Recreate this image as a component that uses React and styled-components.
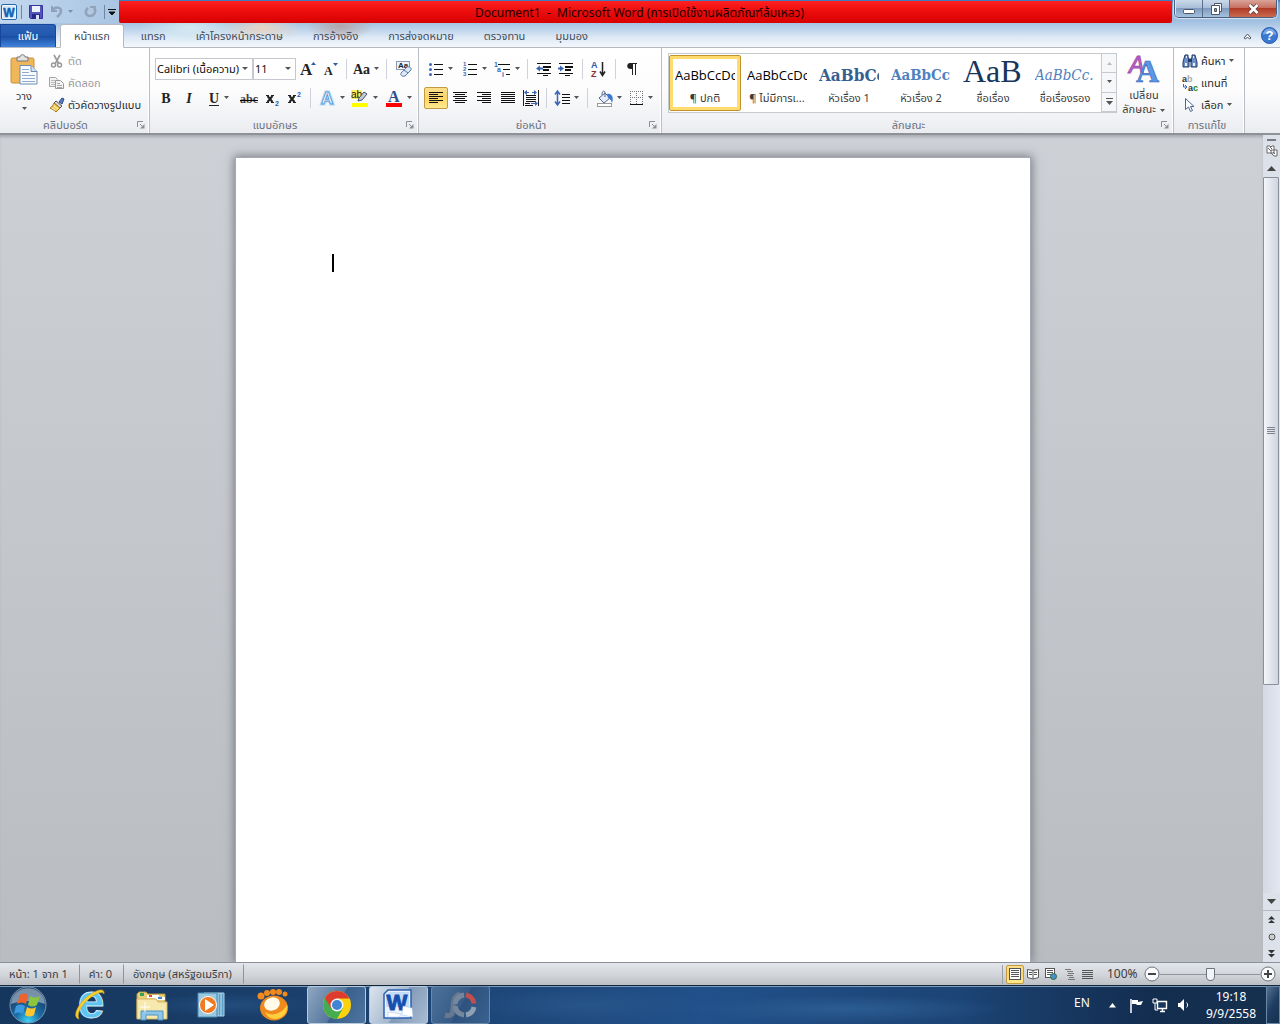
import React, { useState } from "react";
import styled, { createGlobalStyle, css } from "styled-components";

const GlobalStyle = createGlobalStyle`
  * {
    box-sizing: border-box;
  }
  body {
    margin: 0;
    font-family: "Noto Sans", "Noto Sans Thai", "Loma", sans-serif;
    font-size: 11px;
    line-height: 14px;
    color: #3b3b3b;
  }
  button, select, input {
    font: inherit;
    color: inherit;
    margin: 0;
  }
`;

const plainButton = css`
  border: 1px solid transparent;
  background: none;
  padding: 0;
  white-space: nowrap;
`;

const Window = styled.div`
  display: flex;
  flex-direction: column;
  height: 100vh;
  overflow: hidden;
`;

/* title bar */

const Glass = styled.div`
  background:
    radial-gradient(ellipse 34px 14px at 340px 26px, #b3a5a8, transparent),
    radial-gradient(ellipse 40px 14px at 262px 28px, #e8d6c4, transparent),
    radial-gradient(ellipse 50px 16px at 190px 28px, #d4eaf2, transparent),
    linear-gradient(#3876b8, #6f9fd0 3px, #8fb3da 14px, #a9c6e4 24px, #dfeaf6 38px, #f3f7fb 47px);
`;

const TitleBar = styled.header`
  display: flex;
  align-items: flex-start;
  height: 24px;
`;

const QuickAccess = styled.div`
  display: flex;
  align-items: center;
  width: 119px;
  height: 23px;
  padding-left: 1px;
  background: linear-gradient(90deg, #c3d8ee, #a9c5e3);
`;

const QuickButton = styled.button`
  ${plainButton}
  display: flex;
  align-items: center;
  justify-content: center;
  gap: 4px;
  width: ${(p) => p.$w}px;
  height: 20px;
`;

const Title = styled.div`
  flex: 1;
  height: 22px;
  margin-top: 1px;
  border-radius: 0 0 2px 2px;
  background: linear-gradient(#ff2222, #f01010 8px, #d80000);
  color: #1c0000;
  font-size: 12px;
  line-height: 23px;
  text-align: center;
  white-space: pre;
  padding-right: 12px;
`;

const WindowButtons = styled.div`
  display: flex;
  margin: 0 3px 0 2px;
  border: 1px solid #4a5f7d;
  border-top: 0;
  border-radius: 0 0 5px 5px;
  overflow: hidden;
  box-shadow: 0 0 1px 1px #d5e4f3;
`;

const WindowButton = styled.button`
  ${plainButton}
  display: flex;
  align-items: center;
  justify-content: center;
  width: ${(p) => (p.$close ? 47 : 27)}px;
  height: 17px;
  border: 0;
  border-left: 1px solid ${(p) => (p.$first ? "#dce8f4" : "#5b6f8c")};
  background: ${(p) =>
    p.$close
      ? "linear-gradient(#d9a49b, #c9705f 45%, #b13c26 50%, #c96a50)"
      : "linear-gradient(#cbdaea, #a9bfd8 45%, #7f9cbf 50%, #a5c1de)"};
`;

/* tabs */

const TabBar = styled.nav`
  display: flex;
  align-items: flex-end;
  height: 24px;
  border-bottom: 1px solid #b6bac1;
`;

const FileTab = styled.button`
  ${plainButton}
  width: 56px;
  height: 23px;
  border: 1px solid #17479b;
  border-bottom: 0;
  border-radius: 0 3px 0 0;
  background: linear-gradient(#2c62b5, #2157ae 50%, #1c4ea4 52%, #3f84dd);
  color: #fff;
  margin-right: 4px;
`;

const Tab = styled.button`
  ${plainButton}
  height: 23px;
  padding: 0 14px;
  color: #444b57;
  ${(p) =>
    p.$active &&
    css`
      padding: 0 13px;
      margin: 0 2px -1px 0;
      height: 24px;
      border-color: #b6bac1;
      border-bottom-color: #fff;
      border-radius: 3px 3px 0 0;
      background: #fff;
    `}
`;

const TabTools = styled.div`
  display: flex;
  align-items: center;
  gap: 5px;
  margin-left: auto;
  height: 23px;
  padding-right: 2px;
`;

/* ribbon */

const Ribbon = styled.section`
  display: flex;
  height: 87px;
  flex-shrink: 0;
  background: linear-gradient(#ffffff, #fcfcfd 50%, #eaecf0);
  border-bottom: 2px solid #8e9298;
`;

const Group = styled.div`
  display: flex;
  flex-direction: column;
  flex: ${(p) => (p.$w ? `0 0 ${p.$w}px` : "0 1 auto")};
  border-right: 1px solid #b9bdc4;
  box-shadow: inset -1px 0 0 #fff;
`;

const GroupBody = styled.div`
  flex: 1;
  min-height: 0;
  display: flex;
  flex-direction: ${(p) => (p.$column ? "column" : "row")};
  padding: ${(p) => p.$pad || "5px 4px 0"};
`;

const GroupLabel = styled.div`
  display: flex;
  align-items: center;
  height: 16px;
  padding-right: 4px;
  color: #6a7180;

  span {
    flex: 1;
    padding-right: ${(p) => (p.$launch ? 6 : 0)}px;
    text-align: center;
  }
`;

const ToolRow = styled.div`
  display: flex;
  align-items: center;
  height: 22px;
  margin-bottom: 7px;
`;

const Tool = styled.button`
  ${plainButton}
  display: flex;
  align-items: center;
  justify-content: center;
  gap: 3px;
  width: ${(p) => p.$w || 22}px;
  height: 22px;
  border-radius: 2px;
  ${(p) =>
    p.$on &&
    css`
      border-color: #c29b3e;
      background: linear-gradient(#fbdf8d, #fdd565 50%, #ffe98f);
    `}
`;

const Separator = styled.span`
  width: 1px;
  height: ${(p) => p.$h || 20}px;
  margin: 0 ${(p) => p.$gap || 5}px;
  background: ${(p) => p.$color || "#cfd2d8"};
`;

const SelectBox = styled.label`
  position: relative;
  width: ${(p) => p.$w}px;
  height: 22px;
  margin-right: ${(p) => p.$after || 0}px;

  &::after {
    content: "";
    position: absolute;
    right: 5px;
    top: 9px;
    border: 3px solid transparent;
    border-top-color: #555;
    pointer-events: none;
  }

  select {
    width: 100%;
    height: 22px;
    padding: 0 12px 0 1px;
    border: 1px solid #c5c9cf;
    border-radius: 0;
    background: #fff;
    color: #111;
    appearance: none;
  }
`;

const BigButton = styled.button`
  ${plainButton}
  display: flex;
  flex-direction: column;
  align-items: center;
  gap: 4px;
  width: ${(p) => p.$w}px;
  height: 66px;
  padding-top: 3px;
`;

const CommandList = styled.div`
  display: flex;
  flex-direction: column;
`;

const Command = styled.button`
  ${plainButton}
  display: flex;
  align-items: center;
  gap: 3px;
  height: 22px;
  color: ${(p) => (p.disabled ? "#9a9a9a" : "#2b2b2b")};
`;

const Gallery = styled.div`
  display: flex;
  height: 60px;
  margin-top: 3px;
  border: 1px solid #c6c9ce;
  background: #fff;
`;

const StyleItem = styled.button`
  ${plainButton}
  width: 72px;
  height: 56px;
  margin-top: 1px;
  padding: 0 4px;
  display: flex;
  flex-direction: column;
  align-items: center;
  border-radius: 2px;
  ${(p) =>
    p.$on &&
    css`
      border-color: #c2922e;
      box-shadow: inset 0 0 0 3px #ffdc6d;
    `}
`;

const Sample = styled.span`
  width: 60px;
  height: 35px;
  overflow: hidden;
  text-align: left;
  font-family: ${(p) => p.$font || '"Open Sans", sans-serif'};
  font-size: ${(p) => p.$size}px;
  font-weight: ${(p) => (p.$bold ? 700 : 400)};
  font-style: ${(p) => (p.$italic ? "italic" : "normal")};
  line-height: ${(p) => p.$lh || 39}px;
  color: ${(p) => p.$color};
`;

const GalleryScroll = styled.div`
  display: flex;
  flex-direction: column;
  width: 15px;

  button {
    flex: 1;
    display: flex;
    align-items: center;
    justify-content: center;
    padding: 0;
    border: 0;
    border-left: 1px solid #c6c9ce;
    border-bottom: 1px solid #c6c9ce;
    background: #f6f7f9;
  }
`;

/* document */

const Workspace = styled.main`
  flex: 1;
  min-height: 0;
  display: flex;
  background: linear-gradient(#cdd0d5, #b9bcc0);
`;

const Canvas = styled.div`
  flex: 1;
  display: flex;
  justify-content: center;
  padding: 22px 0 0 2px;
  overflow: hidden;
  box-shadow: inset 0 3px 3px -1px #a8abb0;
`;

const Page = styled.article`
  width: 796px;
  padding: 96px;
  background: #fff;
  border: 1px solid #a4a8b0;
  border-bottom: 0;
  box-shadow: 0 0 9px 1px #777b82;
`;

const Caret = styled.div`
  width: 2px;
  height: 18px;
  background: #000;
`;

const ScrollColumn = styled.aside`
  display: flex;
  flex-direction: column;
  width: 17px;
  background: #dde1ea;
`;

const ScrollButton = styled.button`
  ${plainButton}
  display: flex;
  align-items: center;
  justify-content: center;
  height: ${(p) => p.$h || 17}px;
`;

const Splitter = styled.div`
  height: 2px;
  margin: 4px 4px 1px;
  background: #777b83;
`;

const ScrollTrack = styled.div`
  flex: 1;
  background: linear-gradient(90deg, #d4d9e4, #e3e7f0);
`;

const ScrollThumb = styled.div`
  display: flex;
  align-items: center;
  justify-content: center;
  height: 71%;
  margin-right: 1px;
  border: 1px solid #8a909c;
  border-radius: 1px;
  background: linear-gradient(90deg, #f3f6fa, #dde2ea 60%, #cfd4de);
`;

const BrowseButtons = styled.div`
  display: flex;
  flex-direction: column;
  border-top: 1px solid #b5bac5;
`;

/* status bar */

const StatusBar = styled.footer`
  display: flex;
  align-items: center;
  height: 23px;
  border-top: 1px solid #8a8f9c;
  background: linear-gradient(#e3e6eb, #cfd2d7 60%, #bcbfc4);
`;

const StatusItem = styled.button`
  ${plainButton}
  height: 20px;
  padding: 0 11px 1px 8px;
  border-right: 1px solid #8f949c;
`;

const ViewButtons = styled.div`
  display: flex;
  align-items: center;
  margin-left: auto;
  padding-left: 3px;
  border-left: 1px solid #9a9fa8;
`;

const ViewButton = styled(Tool)`
  width: 18px;
  height: 19px;
`;

const Zoom = styled.div`
  display: flex;
  align-items: center;
  padding: 0 4px 0 11px;

  output {
    width: 37px;
    font-size: 12px;
  }

  button {
    ${plainButton}
    display: flex;
    border: 0;
  }

  input {
    appearance: none;
    width: 100px;
    height: 16px;
    background: linear-gradient(#8f949c, #8f949c) center / 100% 1px no-repeat;
  }

  input::-webkit-slider-thumb {
    appearance: none;
    width: 9px;
    height: 13px;
    border: 1px solid #6d737d;
    border-radius: 1px 1px 5px 5px;
    background: #f2f4f7;
  }
`;

/* taskbar */

const Taskbar = styled.div`
  display: flex;
  align-items: center;
  height: 39px;
  border-top: 1px solid #10263c;
  box-shadow: inset 0 1px 0 #7d9ab8;
  background:
    radial-gradient(ellipse 160px 14px at 66% 60%, #2b5c92, transparent),
    radial-gradient(ellipse 120px 16px at 46% 50%, #275489, transparent),
    radial-gradient(ellipse 90px 12px at 18% 50%, #234d7d, transparent),
    linear-gradient(90deg, #15365d, #1c4270 30%, #21508a 55%, #1c4475 75%, #132d4f 90%, #16304f);
`;

const Launcher = styled.button`
  ${plainButton}
  display: flex;
  align-items: center;
  justify-content: center;
  flex-shrink: 0;
  width: ${(p) => p.$w || 62}px;
  height: 38px;
`;

const RunningApp = styled(Launcher)`
  width: 59px;
  margin: 0 0 0 3px;
  border-color: ${(p) => (p.$faint ? "#6a88aa" : "#b8cadd")};
  border-radius: 3px;
  background: ${(p) =>
    p.$active
      ? "linear-gradient(120deg, #dbe4ee, #a5b8cf 50%, #8199b7 52%, #a9bbd1)"
      : p.$faint
      ? "linear-gradient(120deg, #4d7199, #365c87 50%, #2d527d 52%, #3a6190)"
      : "linear-gradient(120deg, #8fa7c1, #56789f 50%, #39608d 52%, #4f759f)"};
`;

const Tray = styled.div`
  display: flex;
  align-items: center;
  margin-left: auto;
  color: #fff;
  font-size: 12px;
`;

const TrayButton = styled.button`
  ${plainButton}
  display: flex;
  align-items: center;
  justify-content: center;
  width: 24px;
  height: 24px;
`;

const Language = styled.span`
  width: 26px;
  padding-bottom: 5px;
`;

const Clock = styled.time`
  width: 70px;
  text-align: center;
  line-height: 17px;
`;

const ShowDesktop = styled.button`
  width: 14px;
  height: 38px;
  padding: 0;
  border: 1px solid #6b86a5;
  background: linear-gradient(120deg, #53718f, #1f3d61 50%, #15304f);
`;

/* icons */

const Svg = ({ w = 16, h = 16, children }) => (
  <svg width={w} height={h} viewBox={`0 0 ${w} ${h}`} fill="none" overflow="visible" aria-hidden="true">
    {children}
  </svg>
);

const Arrow = ({ color = "#555", up }) => (
  <Svg w={7} h={4}>
    <path d={up ? "M1 4h5L3.5 1z" : "M1 0h5L3.5 3z"} fill={color} />
  </Svg>
);

const Lines = ({ rows, color = "#111" }) => (
  <g stroke={color}>
    {rows.map(([x, y, w], i) => (
      <path key={i} d={`M${x} ${y + 0.5}h${w}`} />
    ))}
  </g>
);

const sans = { fontFamily: "Liberation Sans, sans-serif", fontWeight: 700 };
const serif = { fontFamily: "Liberation Serif, serif", fontWeight: 700 };

const Launch = () => (
  <Svg w={8} h={8}>
    <path d="M.5 6V.5H6M3 3l4 4" stroke="#8b8f97" />
    <path d="M7.500 3v4.500H3z" fill="#8b8f97" />
  </Svg>
);

const WordSmall = () => (
  <Svg w={16} h={16}>
    <rect x=".5" y=".5" width="15" height="15" rx="1.5" fill="#f2f8fe" stroke="#2567ab" />
    <rect x="2" y="2" width="12" height="12" fill="#d8e8f8" />
    <text x="8" y="12.500" textAnchor="middle" {...sans} fontSize="12" fill="#0f62b5" stroke="#0f62b5" strokeWidth=".5">W</text>
  </Svg>
);

const SaveIcon = () => (
  <Svg w={14} h={14}>
    <path d="M.5.5h13v13h-12l-1-1z" fill="#5355bd" stroke="#34369a" />
    <path d="M3 1h8v6H3z" fill="#eef2ff" />
    <path d="M3 9h8v5H3z" fill="#26288a" />
    <path d="M7 10h3v4H7z" fill="#dce0f5" />
  </Svg>
);

const UndoIcon = () => (
  <Svg w={13} h={13}>
    <path d="M2 1v5h5" stroke="#8fa2ba" strokeWidth="2" />
    <path d="M2 6c3-5 9-4 9 0 0 3-2 4-4 6" stroke="#8fa2ba" strokeWidth="2.500" />
  </Svg>
);

const RedoIcon = () => (
  <Svg w={13} h={13}>
    <path d="M4 3C0 6 2 11 6 11s7-5 4-8" stroke="#93a4b9" strokeWidth="2.500" />
    <path d="M6 2h5v5" stroke="#93a4b9" strokeWidth="2" />
  </Svg>
);

const PasteIcon = () => (
  <Svg w={28} h={31}>
    <rect x="1" y="4" width="23" height="25" rx="1.5" fill="#efb65a" stroke="#c98e36" />
    <path d="M7 7V3h3c0-3 5-3 5 0h3v4z" fill="#e2e2e2" stroke="#777" />
    <path d="M10 11.500h11l6 6V30H10z" fill="#f8fbff" stroke="#6e8cae" />
    <path d="M21 11.500v6h6" fill="#cddff2" stroke="#6e8cae" />
    <path d="M12 15.500h7M12 18.500h7M12 21.500h13M12 24.500h13M12 27.500h13" stroke="#8facd0" />
  </Svg>
);

const CutIcon = () => (
  <Svg>
    <path d="M5 2l5 9M11 2L6 11" stroke="#999" strokeWidth="1.600" />
    <circle cx="4.500" cy="12" r="2" stroke="#999" strokeWidth="1.500" />
    <circle cx="10.500" cy="12" r="2" stroke="#999" strokeWidth="1.500" />
  </Svg>
);

const CopyIcon = () => (
  <Svg>
    <path d="M.5 2.500h6l2 2v7h-8z" fill="#f2f2f2" stroke="#a5a5a5" />
    <path d="M2 5.500h4M2 7.500h4M2 9.500h4" stroke="#bbb" />
    <path d="M6.500 5.500h5l3 3v5h-8z" fill="#f2f2f2" stroke="#999" />
    <path d="M8 8.500h3M8 10.500h5M8 12.500h5" stroke="#aaa" />
  </Svg>
);

const BrushIcon = () => (
  <Svg>
    <path d="M10 5l3-4 2 1-2 5z" fill="#5b7fc4" stroke="#2e4a86" />
    <path d="M7 4l6 5-2 2-6-5z" fill="#d6d8dd" stroke="#555" />
    <path d="M5 6l6 5-4 4c-2-2-4-3-6-4 2-1 3-3 4-5z" fill="#f4c95c" stroke="#a57a1d" />
    <path d="M5 9l4 3M3 11l3 2" stroke="#fff1b8" />
  </Svg>
);

const GrowFont = ({ down }) => (
  <Svg w={18} h={18}>
    <text x={down ? 3 : 1} y="15" {...serif} fontSize={down ? 12 : 17} fill="#222">A</text>
    <path d={down ? "M12 3h5l-2.500 3z" : "M12 5h5l-2.500-3z"} fill="#2f59a8" />
  </Svg>
);

const ChangeCase = () => (
  <Svg w={17} h={18}>
    <text x="0" y="14" {...serif} fontSize="14" fill="#222">Aa</text>
  </Svg>
);

const ClearFormat = () => (
  <Svg w={18} h={18}>
    <rect x="1.500" y="1.500" width="13" height="8" fill="#eef4fb" stroke="#8b9bb5" />
    <text x="3" y="8" {...sans} fontSize="8" fill="#223">Aa</text>
    <path d="M6 13l6-6c2-1 5 1 4 3l-6 6c-3 1-5-1-4-3z" fill="#dce9f7" stroke="#5a76a5" />
    <path d="M9 10l4 3" stroke="#5a76a5" />
  </Svg>
);

const Letter = ({ children, italic, underline, strike }) => (
  <Svg w={strike ? 18 : 12} h={18}>
    <text
      x={strike ? 9 : 6}
      y="14"
      textAnchor="middle"
      {...serif}
      fontSize={strike ? 12 : 14}
      fontStyle={italic ? "italic" : "normal"}
      fill={strike ? "#444" : "#222"}
    >
      {children}
    </text>
    {underline && <path d="M1 16.500h10" stroke="#222" />}
    {strike && <path d="M0 11.500h18" stroke="#000" />}
  </Svg>
);

const Script = ({ up }) => (
  <Svg w={15} h={18}>
    <path d="M2.500 7l5 6M7.500 7l-5 6" stroke="#222" strokeWidth="2" />
    <path d="M1 6.500h3M6 6.500h3M1 13.500h3M6 13.500h3" stroke="#222" />
    <text x="10" y={up ? 8 : 17} {...sans} fontSize="7" fill="#2f59a8">2</text>
  </Svg>
);

const TextEffects = () => (
  <Svg w={17} h={18}>
    <text x="2" y="15" {...sans} fontSize="17" fill="#fff" stroke="#b9dcf7" strokeWidth="3">A</text>
    <text x="2" y="15" {...sans} fontSize="17" fill="#fff" stroke="#5b9bd5">A</text>
  </Svg>
);

const Highlight = () => (
  <Svg w={18} h={18}>
    <rect y="1" width="11" height="9" fill="#ffef5c" />
    <text x="0" y="9" {...sans} fontWeight="400" fontSize="10" fill="#111">ab</text>
    <path d="M8 9l5-6 3 2-5 6-4 1z" fill="#c4cbd8" stroke="#44506a" />
    <path d="M1 14h16v4H1z" fill="#ff0" />
  </Svg>
);

const FontColor = () => (
  <Svg w={18} h={18}>
    <text x="3" y="13" {...serif} fontSize="16" fill="#2b4d8c">A</text>
    <path d="M1 14h16v4H1z" fill="#f00" />
  </Svg>
);

const Bullets = () => (
  <Svg w={16} h={16}>
    <g fill="#3b66b5">
      <circle cx="2.500" cy="3.500" r="1.500" />
      <circle cx="2.500" cy="8.500" r="1.500" />
      <circle cx="2.500" cy="13.500" r="1.500" />
    </g>
    <Lines rows={[[6, 3, 9], [6, 8, 9], [6, 13, 9]]} />
  </Svg>
);

const Numbers = () => (
  <Svg w={16} h={16}>
    <g {...sans} fontSize="6" fill="#3b66b5">
      <text x="1" y="5">1</text>
      <text x="1" y="10">2</text>
      <text x="1" y="15">3</text>
    </g>
    <Lines rows={[[6, 3, 9], [6, 8, 9], [6, 13, 9]]} />
  </Svg>
);

const Multilevel = () => (
  <Svg w={18} h={16}>
    <g {...sans} fontSize="7" fill="#3b66b5">
      <text x="1" y="6">1</text>
      <text x="4" y="11">a</text>
      <text x="9" y="16">i</text>
    </g>
    <Lines rows={[[5, 3, 12], [10, 8, 7], [13, 13, 4]]} />
  </Svg>
);

const Indent = ({ out }) => (
  <Svg w={16} h={14}>
    <Lines rows={[[1, 1, 14], [7, 4, 8], [7, 5, 8], [7, 7, 6], [7, 8, 6], [1, 11, 14], [7, 13, 5]]} />
    <path d={out ? "M0 6.500l4-3v2h3v2H4v2z" : "M6 6.500l-4-3v2H0v2h2v2z"} fill="#3b66b5" />
  </Svg>
);

const SortIcon = () => (
  <Svg w={18} h={18}>
    <text x="1" y="8" {...sans} fontSize="9" fill="#2b59b0">A</text>
    <text x="1" y="17" {...sans} fontSize="9" fill="#8e2f35">Z</text>
    <path d="M12.500 2v13M10 11.500l2.500 4 2.500-4" stroke="#222" strokeWidth="1.500" />
  </Svg>
);

const Pilcrow = () => (
  <Svg w={12} h={14}>
    <path d="M4 1h7v1h-1v11H9V2H7v11H6V7C0 8 0 1 4 1z" fill="#222" />
  </Svg>
);

const aligns = {
  left: [0, 14, 0, 9],
  center: [0, 14, 2, 10],
  right: [0, 14, 5, 9],
  justify: [0, 14, 0, 14],
};

const Align = ({ kind, color }) => {
  const [x, w, x2, w2] = aligns[kind];
  return (
    <Svg w={14} h={12}>
      <Lines
        color={color}
        rows={[[x, 0, w], [x2, 2, w2], [x, 4, w], [x2, 6, w2], [x, 8, w], [x2, 10, w2]]}
      />
    </Svg>
  );
};

const Distribute = () => (
  <Svg w={16} h={16}>
    <path d="M.5 0v16M15.500 0v16" stroke="#222" />
    <Lines rows={[[3, 5, 10], [3, 7, 10], [3, 9, 10], [3, 11, 10], [2, 13, 5], [2, 15, 8]]} />
    <path d="M1 2.500L4 0v2h2v1H4v2zM14 2.500L11 0v2H9v1h2v2zM8 13h4v-2l3 2.500-3 2.500v-2H8z" fill="#3b66b5" />
  </Svg>
);

const LineSpacing = () => (
  <Svg w={16} h={16}>
    <path d="M3.500 2v12M1 4.500L3.500 1 6 4.500M1 11.500L3.500 15 6 11.500" stroke="#3b66b5" strokeWidth="1.500" />
    <Lines rows={[[8, 4, 8], [8, 7, 8], [8, 10, 8], [8, 13, 8]]} />
  </Svg>
);

const Shading = () => (
  <Svg w={17} h={17}>
    <path d="M3 8l6-5 5 5-6 5z" fill="#e3ecf8" stroke="#50668e" />
    <path d="M9 7V2c-2-2-3 0-3 3" stroke="#50668e" />
    <path d="M11 4c5-1 7 4 5 9-1-3-2-4-4-5z" fill="#3b78cf" />
    <rect x="1.500" y="13.500" width="14" height="3" fill="#fff" stroke="#999" />
  </Svg>
);

const Borders = () => (
  <Svg w={14} h={14}>
    <path d="M0 .5h13M0 6.500h13M.5 0v13M6.500 0v13M12.500 0v13" stroke="#777" strokeDasharray="1 1" />
    <path d="M0 13.500h13" stroke="#111" />
  </Svg>
);

const ChangeStyles = () => (
  <Svg w={32} h={30}>
    <text x="1" y="19" {...sans} fontSize="23" fontStyle="italic" fontWeight="400" fill="#c069c8" stroke="#a04fb0">A</text>
    <text x="8" y="28" {...serif} fontSize="32" fill="#5c97e6" stroke="#2f62b0" strokeWidth=".6">A</text>
  </Svg>
);

const Binoculars = () => (
  <Svg>
    <path d="M3 2h3v3h1v9H1V9zM10 2h3l2 7v5H9V5h1z" fill="#6e8fc5" stroke="#1f3a6e" />
    <path d="M6 6h4v3H6z" fill="#1f3a6e" />
    <path d="M3 10h2v3H3zM11 10h2v3h-2zM4 3h1v2H4zM11 3h1v2h-1z" fill="#eaf2ff" />
  </Svg>
);

const ReplaceIcon = () => (
  <Svg>
    <text x="0" y="7" {...sans} fontSize="9" fill="#333">a<tspan fill="#aaa">b</tspan></text>
    <text x="6" y="16" {...sans} fontSize="9" fill="#333">a<tspan fill="#13861d">c</tspan></text>
    <path d="M1.500 9v3h3M3 10l2 2-2 2" stroke="#3b66b5" />
  </Svg>
);

const SelectIcon = () => (
  <Svg>
    <path d="M3.500 1.500v11l3-2.500 2 4.500 2-1-2-4h3.500z" fill="#f8fbff" stroke="#4d6690" />
  </Svg>
);

const HelpIcon = () => (
  <Svg w={17} h={17}>
    <circle cx="8.500" cy="8.500" r="8" fill="#3c78d0" stroke="#2a5cab" />
    <path d="M2 8a6.500 6.500 0 0 1 13 0c-4-2-9-2-13 0z" fill="#7ba7e6" />
    <text x="8.500" y="13" textAnchor="middle" {...sans} fontSize="13" fill="#fff">?</text>
  </Svg>
);

const StartOrb = () => (
  <Svg w={38} h={38}>
    <defs>
      <radialGradient id="orb" cx=".5" cy=".95" r=".8">
        <stop offset="0" stopColor="#3fd3f5" />
        <stop offset=".45" stopColor="#1a6ca5" />
        <stop offset="1" stopColor="#1b3b60" />
      </radialGradient>
    </defs>
    <circle cx="19" cy="19" r="18" fill="url(#orb)" stroke="#7a98b4" />
    <path d="M2 18C3-3 35-3 36 18c-10-4-24-4-34 0z" fill="#c5d6e4" opacity=".55" />
    <path d="M11 9c3-2 6-2 8 0l-2 9c-3-2-6-2-9 0z" fill="#f0622b" />
    <path d="M21 10c3 2 6 2 10 0l-3 9c-3 2-6 2-9 0z" fill="#8cc63e" />
    <path d="M7 20c3-2 6-2 9 0l-2 8c-3-2-6-2-9 0z" fill="#3c9be0" />
    <path d="M18 21c3 2 6 2 9 0l-2 8c-3 2-6 2-9 0z" fill="#fcc62f" />
  </Svg>
);

const IeIcon = () => (
  <Svg w={34} h={34}>
    <text x="18" y="30" textAnchor="middle" {...sans} fontSize="48" fill="#5fc4f2" stroke="#d5f1fd" strokeWidth=".8">e</text>
    <path d="M6 31C-2 29 6 15 15 8 23 2 32-1 31 6c-1-3-8-1-14 4C9 16 3 26 6 31z" fill="#f8d02e" stroke="#d8a51b" strokeWidth=".6" />
  </Svg>
);

const ExplorerIcon = () => (
  <Svg w={34} h={32}>
    <path d="M2 5l2-2h7l2 2h17v24H2z" fill="#e8cf7e" stroke="#b6953f" />
    <path d="M5 4h4v3H5z" fill="#35a34a" />
    <path d="M12 6h12v3H12z" fill="#fff" />
    <path d="M14 6h3v2h-3z" fill="#d34b32" />
    <path d="M20 8h10v3H20z" fill="#fff" />
    <path d="M23 8h4v2h-4z" fill="#3a86d8" />
    <path d="M2 10h19l2 3h9v17H2z" fill="#f7e9ae" stroke="#d2b464" />
    <path d="M6 31V22h22v9h-5v-5H11v5z" fill="#8ec5e8" stroke="#4b93c2" />
    <path d="M10 13v10M5 18h10" stroke="#fff" />
  </Svg>
);

const PlayerIcon = () => (
  <Svg w={28} h={28}>
    <path d="M7 2h20v23H7z" fill="#5d9fc5" stroke="#a8d3ea" />
    <path d="M21 2v23M24 2v23" stroke="#bfe0f1" />
    <path d="M1 2h19v24H1z" fill="#9cc9e2" stroke="#4a8bb2" />
    <circle cx="11" cy="14" r="8.500" fill="#f07a22" stroke="#fff" />
    <path d="M8 8l9 6-9 6z" fill="#fff" />
  </Svg>
);

const GomIcon = () => (
  <Svg w={34} h={34}>
    <g fill="#f08a1d">
      <circle cx="5" cy="8" r="3.500" />
      <circle cx="11" cy="5" r="3" />
      <circle cx="17" cy="4" r="3" />
      <circle cx="23" cy="4" r="3" />
      <circle cx="29" cy="6" r="2.500" />
      <ellipse cx="18" cy="20" rx="14" ry="12.500" />
    </g>
    <path d="M9 24c6 5 17 2 22-7 1 8-5 14-12 14-5 0-8-3-10-7z" fill="#ffcf3d" />
    <ellipse cx="16" cy="16" rx="8" ry="6.500" transform="rotate(-20 16 16)" fill="#fffbe8" />
  </Svg>
);

const ChromeIcon = () => (
  <Svg w={30} h={30}>
    <circle cx="15" cy="15" r="14" fill="#fbd20b" />
    <path d="M15 15L2.900 8A14 14 0 0 0 15 29l6-11z" fill="#45ad4f" />
    <path d="M15 8.500h12.400A14 14 0 0 0 2.900 8l6 10z" fill="#dd3b2f" />
    <circle cx="15" cy="15" r="6.500" fill="#f5f5f5" />
    <circle cx="15" cy="15" r="5" fill="#3f85d6" />
  </Svg>
);

const WordLarge = () => (
  <Svg w={32} h={32}>
    <path d="M1 5l4-4h23v28H1z" fill="#eaf3fd" stroke="#2c62b2" strokeWidth="1.500" />
    <path d="M3 6l3-3h20v15H3z" fill="#c4dcf8" />
    <text x="14" y="21" textAnchor="middle" {...sans} fontSize="22" fill="#164fae" stroke="#164fae">W</text>
    <path d="M5 23l13 2-2 3H5zM20 17l9 2 1 9-11-2z" fill="#fff" stroke="#a9c2e4" strokeWidth=".5" />
  </Svg>
);

const CaptureIcon = () => (
  <Svg w={32} h={28}>
    <path d="M0 24c7 2 8-2 8-7 0-7 1-12 7-14" stroke="#66788f" strokeWidth="5" />
    <path d="M19 4a10 10 0 0 0-9 9M10 15a10 10 0 0 0 9 9" stroke="#75879c" strokeWidth="5" />
    <path d="M21 24a10 10 0 0 0 8-8" stroke="#8fa0b5" strokeWidth="5" />
    <path d="M21 4a10 10 0 0 1 8 8.500" stroke="#c14e4e" strokeWidth="5" />
  </Svg>
);

const ZoomSign = ({ plus }) => (
  <Svg w={16} h={16}>
    <circle cx="8" cy="8" r="7" fill="#fafbfc" stroke="#6d737d" />
    <path d={plus ? "M4 8h8M8 4v8" : "M4 8h8"} stroke="#444" strokeWidth="2" />
  </Svg>
);

const tabs = ["หน้าแรก", "แทรก", "เค้าโครงหน้ากระดาษ", "การอ้างอิง", "การส่งจดหมาย", "ตรวจทาน", "มุมมอง"];

const heading = '"DejaVu Serif Condensed", "DejaVu Serif", serif';

const styles = [
  { name: "¶ ปกติ", sample: "AaBbCcDc", size: 13, color: "#000" },
  { name: "¶ ไม่มีการเ...", sample: "AaBbCcDc", size: 13, color: "#000" },
  { name: "หัวเรื่อง 1", sample: "AaBbCc", size: 17, color: "#365f91", font: heading, bold: true },
  { name: "หัวเรื่อง 2", sample: "AaBbCc", size: 15, color: "#4f81bd", font: heading, bold: true },
  { name: "ชื่อเรื่อง", sample: "AaB", size: 32, color: "#17365d", font: '"Liberation Serif", serif', lh: 30 },
  { name: "ชื่อเรื่องรอง", sample: "AaBbCc.", size: 15, color: "#4f81bd", font: heading, italic: true },
];

function RibbonGroup({ label, w, pad, column, launch = true, children }) {
  return (
    <Group $w={w}>
      <GroupBody $pad={pad} $column={column}>
        {children}
      </GroupBody>
      <GroupLabel $launch={launch}>
        <span>{label}</span>
        {launch && <Launch />}
      </GroupLabel>
    </Group>
  );
}

function App() {
  const [tab, setTab] = useState(0);
  const [style, setStyle] = useState(0);
  const [align, setAlign] = useState("left");
  const [zoom, setZoom] = useState(100);

  return (
    <Window>
      <GlobalStyle />
      <Glass>
        <TitleBar>
          <QuickAccess>
            <WordSmall />
            <Separator $h={14} $gap={4} $color="#6f86a3" />
            <QuickButton $w={20} aria-label="Save"><SaveIcon /></QuickButton>
            <QuickButton $w={32} aria-label="Undo"><UndoIcon /><Arrow color="#8090a5" /></QuickButton>
            <QuickButton $w={25} aria-label="Redo"><RedoIcon /></QuickButton>
            <Separator $h={14} $gap={1} $color="#6f86a3" />
            <QuickButton $w={12} aria-label="Customize">
              <Svg w={8} h={8}>
                <path d="M0 1.500h8M1 4h6L4 7z" stroke="#111" fill="#111" />
              </Svg>
            </QuickButton>
          </QuickAccess>
          <Title>Document1  -  Microsoft Word (การเปิดใช้งานผลิตภัณฑ์ล้มเหลว)</Title>
          <WindowButtons>
            <WindowButton $first aria-label="Minimize">
              <Svg w={12} h={12}>
                <rect x=".5" y="6.500" width="11" height="4" rx="1" fill="#fff" stroke="#4d5666" />
              </Svg>
            </WindowButton>
            <WindowButton aria-label="Restore">
              <Svg w={13} h={12}>
                <path d="M4.500.500h7v8h-7z" fill="#fff" stroke="#4d5666" />
                <path d="M1.500 2.500h8v9h-8z" fill="#fff" stroke="#4d5666" />
                <path d="M4.500 5.500h2v3h-2z" fill="#87a0bf" stroke="#4d5666" />
              </Svg>
            </WindowButton>
            <WindowButton $close aria-label="Close">
              <Svg w={13} h={12}>
                <path d="M2.500 2l8 8M10.500 2l-8 8" stroke="#5b4141" strokeWidth="4" />
                <path d="M2.500 2l8 8M10.500 2l-8 8" stroke="#fff" strokeWidth="2.500" />
              </Svg>
            </WindowButton>
          </WindowButtons>
        </TitleBar>
        <TabBar>
          <FileTab>แฟ้ม</FileTab>
          {tabs.map((name, i) => (
            <Tab key={name} $active={tab === i} onClick={() => setTab(i)}>{name}</Tab>
          ))}
          <TabTools>
            <QuickButton $w={16} aria-label="Minimize the ribbon">
              <Svg w={9} h={8}>
                <path d="M1 6l3.500-4L8 6l-1.500 1-2-2-2 2z" fill="#fff" stroke="#4b5361" />
              </Svg>
            </QuickButton>
            <QuickButton $w={18} aria-label="Help"><HelpIcon /></QuickButton>
          </TabTools>
        </TabBar>
      </Glass>

      <Ribbon>
        <RibbonGroup label="คลิปบอร์ด" w={150} pad="2px 4px 0 0">
          <BigButton $w={48}>
            <PasteIcon />
            วาง
            <Arrow />
          </BigButton>
          <CommandList>
            <Command disabled><CutIcon />ตัด</Command>
            <Command disabled><CopyIcon />คัดลอก</Command>
            <Command><BrushIcon />ตัวคัดวางรูปแบบ</Command>
          </CommandList>
        </RibbonGroup>

        <RibbonGroup label="แบบอักษร" w={269} column pad="10px 2px 0 5px">
          <ToolRow>
            <SelectBox $w={98}>
              <select aria-label="Font"><option>Calibri (เนื้อความ)</option></select>
            </SelectBox>
            <SelectBox $w={43} $after={1}>
              <select aria-label="Font size"><option>11</option></select>
            </SelectBox>
            <Tool aria-label="Grow font"><GrowFont /></Tool>
            <Tool aria-label="Shrink font"><GrowFont down /></Tool>
            <Separator />
            <Tool $w={29} aria-label="Change case"><ChangeCase /><Arrow /></Tool>
            <Separator />
            <Tool $w={24} aria-label="Clear formatting"><ClearFormat /></Tool>
          </ToolRow>
          <ToolRow>
            <Tool aria-label="Bold"><Letter>B</Letter></Tool>
            <Tool $w={24} aria-label="Italic"><Letter italic>I</Letter></Tool>
            <Tool $w={36} aria-label="Underline"><Letter underline>U</Letter><Arrow /></Tool>
            <Tool $w={24} aria-label="Strikethrough"><Letter strike>abc</Letter></Tool>
            <Tool aria-label="Subscript"><Script /></Tool>
            <Tool aria-label="Superscript"><Script up /></Tool>
            <Separator />
            <Tool $w={32} aria-label="Text effects"><TextEffects /><Arrow /></Tool>
            <Tool $w={34} aria-label="Highlight"><Highlight /><Arrow /></Tool>
            <Tool $w={34} aria-label="Font color"><FontColor /><Arrow /></Tool>
          </ToolRow>
        </RibbonGroup>

        <RibbonGroup label="ย่อหน้า" w={243} column pad="10px 2px 0 5px">
          <ToolRow>
            <Tool $w={34} aria-label="Bullets"><Bullets /><Arrow /></Tool>
            <Tool $w={34} aria-label="Numbering"><Numbers /><Arrow /></Tool>
            <Tool $w={30} aria-label="Multilevel list"><Multilevel /><Arrow /></Tool>
            <Separator />
            <Tool aria-label="Decrease indent"><Indent out /></Tool>
            <Tool aria-label="Increase indent"><Indent /></Tool>
            <Separator />
            <Tool aria-label="Sort"><SortIcon /></Tool>
            <Separator />
            <Tool aria-label="Show marks"><Pilcrow /></Tool>
          </ToolRow>
          <ToolRow>
            {Object.keys(aligns).map((kind) => (
              <Tool
                key={kind}
                $w={24}
                $on={align === kind}
                aria-label={`Align ${kind}`}
                onClick={() => setAlign(kind)}
              >
                <Align kind={kind} />
              </Tool>
            ))}
            <Tool aria-label="Distribute"><Distribute /></Tool>
            <Separator $gap={4} />
            <Tool $w={32} aria-label="Line spacing"><LineSpacing /><Arrow /></Tool>
            <Separator $gap={4} />
            <Tool $w={34} aria-label="Shading"><Shading /><Arrow /></Tool>
            <Tool $w={32} aria-label="Borders"><Borders /><Arrow /></Tool>
          </ToolRow>
        </RibbonGroup>

        <RibbonGroup label="ลักษณะ" w={511} pad="2px 2px 0 6px">
          <Gallery>
            {styles.map((s, i) => (
              <StyleItem key={s.name} $on={style === i} onClick={() => setStyle(i)}>
                <Sample
                  $size={s.size}
                  $color={s.color}
                  $font={s.font}
                  $bold={s.bold}
                  $italic={s.italic}
                  $lh={s.lh}
                >
                  {s.sample}
                </Sample>
                {s.name}
              </StyleItem>
            ))}
            <GalleryScroll>
              <button aria-label="Previous styles"><Arrow up color="#bbb" /></button>
              <button aria-label="Next styles"><Arrow /></button>
              <button aria-label="More styles">
                <Svg w={7} h={7}>
                  <path d="M0 .5h7" stroke="#555" />
                  <path d="M0 3h7L3.500 7z" fill="#555" />
                </Svg>
              </button>
            </GalleryScroll>
          </Gallery>
          <BigButton $w={54}>
            <ChangeStyles />
            <span>
              เปลี่ยน
              <br />
              ลักษณะ <Arrow />
            </span>
          </BigButton>
        </RibbonGroup>

        <RibbonGroup label="การแก้ไข" w={71} launch={false} pad="2px 2px 0 7px">
          <CommandList>
            <Command><Binoculars />ค้นหา <Arrow /></Command>
            <Command><ReplaceIcon />แทนที่</Command>
            <Command><SelectIcon />เลือก <Arrow /></Command>
          </CommandList>
        </RibbonGroup>
      </Ribbon>

      <Workspace>
        <Canvas>
          <Page>
            <Caret />
          </Page>
        </Canvas>
        <ScrollColumn>
          <Splitter />
          <ScrollButton $h={18} aria-label="Ruler">
            <Svg w={12} h={12}>
              <path d="M1 1h3l1 1 1-1h2v7H1zM5 5h6v6H8L5 8z" fill="#fff" stroke="#666" />
              <path d="M2 3l3 3M4 2l2 2M7 7l2 2" stroke="#666" />
            </Svg>
          </ScrollButton>
          <ScrollButton aria-label="Scroll up">
            <Svg w={9} h={5}><path d="M0 5h9L4.500 0z" fill="#444" /></Svg>
          </ScrollButton>
          <ScrollTrack>
            <ScrollThumb>
              <Svg w={8} h={8}><Lines color="#7c828d" rows={[[0, 0, 8], [0, 2, 8], [0, 4, 8], [0, 6, 8]]} /></Svg>
            </ScrollThumb>
          </ScrollTrack>
          <ScrollButton aria-label="Scroll down">
            <Svg w={9} h={5}><path d="M0 0h9L4.500 5z" fill="#444" /></Svg>
          </ScrollButton>
          <BrowseButtons>
            <ScrollButton aria-label="Previous page">
              <Svg w={7} h={8}><path d="M0 3.500L3.500 0 7 3.500zM0 7L3.500 4 7 7z" fill="#333" /></Svg>
            </ScrollButton>
            <ScrollButton aria-label="Browse object">
              <Svg w={8} h={8}><circle cx="4" cy="4" r="3" stroke="#555" fill="#ccc" /></Svg>
            </ScrollButton>
            <ScrollButton aria-label="Next page">
              <Svg w={7} h={8}><path d="M0 0h7L3.500 3.500zM0 4h7L3.500 7.500z" fill="#333" /></Svg>
            </ScrollButton>
          </BrowseButtons>
        </ScrollColumn>
      </Workspace>

      <StatusBar>
        <StatusItem>หน้า: 1 จาก 1</StatusItem>
        <StatusItem>คำ: 0</StatusItem>
        <StatusItem>อังกฤษ (สหรัฐอเมริกา)</StatusItem>
        <ViewButtons>
          <ViewButton $on aria-label="Print layout">
            <Svg w={12} h={12}>
              <rect x=".5" y=".5" width="11" height="11" fill="#fff" stroke="#555" />
              <Lines color="#555" rows={[[2, 2, 8], [2, 4, 8], [2, 6, 8], [2, 8, 8]]} />
            </Svg>
          </ViewButton>
          <ViewButton aria-label="Full screen reading">
            <Svg w={12} h={12}>
              <path d="M.5 1.500L6 2.500l5.500-1v8L6 11 .5 9.500zM6 2.500V11" fill="#fff" stroke="#555" />
              <path d="M2 4.500h3M2 6.500h3M7 4.500h3M7 6.500h3" stroke="#555" />
            </Svg>
          </ViewButton>
          <ViewButton aria-label="Web layout">
            <Svg w={12} h={12}>
              <rect x=".5" y=".5" width="9" height="9" fill="#fff" stroke="#555" />
              <Lines color="#555" rows={[[2, 2, 6], [2, 4, 6], [2, 6, 4]]} />
              <circle cx="8.500" cy="8.500" r="3" fill="#4a90c8" stroke="#2d6a4a" />
            </Svg>
          </ViewButton>
          <ViewButton aria-label="Outline">
            <Svg w={11} h={11}><Lines color="#777" rows={[[1, 0, 6], [3, 2, 6], [4, 4, 6], [3, 6, 6], [5, 8, 5], [4, 10, 7]]} /></Svg>
          </ViewButton>
          <ViewButton aria-label="Draft">
            <Svg w={11} h={11}><Lines color="#555" rows={[[0, 1, 11], [0, 3, 11], [0, 5, 11], [0, 7, 11], [0, 9, 11]]} /></Svg>
          </ViewButton>
        </ViewButtons>
        <Zoom>
          <output>{zoom}%</output>
          <button aria-label="Zoom out" onClick={() => setZoom(zoom - 10)}><ZoomSign /></button>
          <input
            type="range"
            aria-label="Zoom"
            min="10"
            max="190"
            value={zoom}
            onChange={(e) => setZoom(Number(e.target.value))}
          />
          <button aria-label="Zoom in" onClick={() => setZoom(zoom + 10)}><ZoomSign plus /></button>
        </Zoom>
      </StatusBar>

      <Taskbar>
        <Launcher $w={56} aria-label="Start"><StartOrb /></Launcher>
        <Launcher $w={68} aria-label="Internet Explorer"><IeIcon /></Launcher>
        <Launcher $w={56} aria-label="Explorer"><ExplorerIcon /></Launcher>
        <Launcher aria-label="Media Player"><PlayerIcon /></Launcher>
        <Launcher aria-label="GOM Player"><GomIcon /></Launcher>
        <RunningApp aria-label="Chrome"><ChromeIcon /></RunningApp>
        <RunningApp $active aria-label="Word"><WordLarge /></RunningApp>
        <RunningApp $faint aria-label="Capture"><CaptureIcon /></RunningApp>
        <Tray>
          <Language>EN</Language>
          <TrayButton aria-label="Show hidden icons">
            <Svg w={7} h={5}><path d="M0 4.500L3.500 0 7 4.500z" fill="#fff" /></Svg>
          </TrayButton>
          <TrayButton aria-label="Action center">
            <Svg w={15} h={15}>
              <path d="M2 1v14" stroke="#fff" strokeWidth="1.500" />
              <path d="M3 2h6v2l5-1-2 4H8l-1-1H3z" fill="#fff" />
            </Svg>
          </TrayButton>
          <TrayButton aria-label="Network">
            <Svg w={16} h={16}>
              <path d="M5.500 4.500h9v7h-9zM8 14.500h5M10.500 12v2" fill="#17375c" stroke="#fff" strokeWidth="1.400" />
              <path d="M1 2v4h4V2M2 1v2M4 1v2M3 6v7h3" stroke="#fff" />
            </Svg>
          </TrayButton>
          <TrayButton aria-label="Volume">
            <Svg w={14} h={14}>
              <path d="M1 5h2l4-4v12L3 9H1z" fill="#fff" />
              <path d="M9.500 4.500c1.500 1.500 1.500 3.500 0 5" stroke="#fff" />
            </Svg>
          </TrayButton>
          <Clock>
            19:18
            <br />
            9/9/2558
          </Clock>
          <ShowDesktop aria-label="Show desktop" />
        </Tray>
      </Taskbar>
    </Window>
  );
}

export default App;
